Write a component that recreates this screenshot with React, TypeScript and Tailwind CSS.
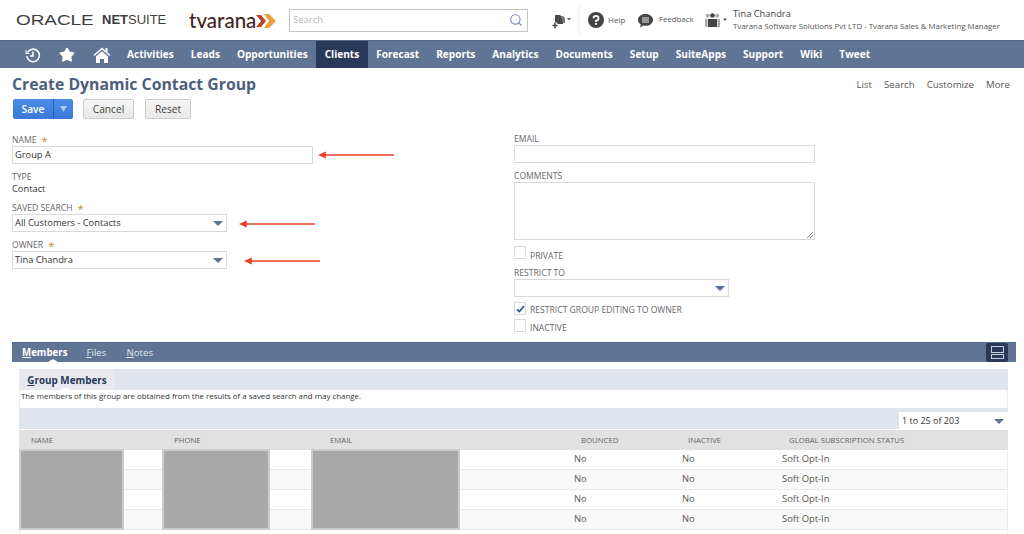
import * as React from 'react'
import { Search, Star } from 'lucide-react'

const navItems = ['Activities', 'Leads', 'Opportunities', 'Clients', 'Forecast', 'Reports', 'Analytics', 'Documents', 'Setup', 'SuiteApps', 'Support', 'Wiki', 'Tweet']
const gridCols = 'grid grid-cols-[143px_156px_251px_107px_101px_1fr]'

const Caret = () => (
  <svg width="10" height="5" viewBox="0 0 10 5" className="shrink-0">
    <path d="M0 0h10L5 5z" fill="#5d7095" />
  </svg>
)

const Label = ({ text, req }: { text: string; req?: boolean }) => (
  <div className="flex h-[14px] items-center pt-[2px] text-[8.600px] text-[#666]">
    {text}
    {req && <span className="ml-[5px] text-[11px] leading-none text-[#c08a2c]">*</span>}
  </div>
)

const Select = ({ value, width }: { value: string; width: string }) => (
  <div className={`flex h-[18px] items-center justify-between border border-[#d9d9d9] pl-[2px] pr-[3px] text-[9.300px] text-[#333] ${width}`}>
    <span>{value}</span>
    <Caret />
  </div>
)

const Check = ({ text, checked, className, textClass }: { text: string; checked?: boolean; className?: string; textClass: string }) => (
  <div className={`flex h-[14px] items-start ${className}`}>
    <div className="flex h-[13px] w-[12px] items-center justify-center border border-[#d9d9d9] bg-white">
      {checked && (
        <svg width="9" height="8" viewBox="0 0 9 8">
          <path d="M1 4.500 3.400 6.500 8 1" fill="none" stroke="#2f5597" strokeWidth="1.800" />
        </svg>
      )}
    </div>
    <span className={`ml-[4px] text-[8.600px] leading-[14px] text-[#666] ${textClass}`}>{text}</span>
  </div>
)

const Arrow = ({ x, y, w }: { x: string; y: string; w: string }) => (
  <svg width="78" height="8" viewBox="0 0 78 8" className={`absolute ${x} ${y} ${w}`} preserveAspectRatio="none">
    <path d="M0 4 8 0.500V3.300H78V4.700H8V7.500z" fill="#e8412a" />
  </svg>
)

export default function App() {
  return (
    <div className="relative h-[534px] w-[1024px] overflow-hidden bg-white font-['Open_Sans',sans-serif]">
      {/* top bar */}
      <div className="flex h-10 items-center">
        <div className="ml-[16px] flex w-[157px] items-center font-['Liberation_Sans',sans-serif] text-[#3d3d3d]">
          <span className="inline-block w-[86px] origin-left scale-x-[1.35] text-[14px]">ORACLE</span>
          <span className="text-[13px] font-bold">NET</span>
          <span className="text-[13px]">SUITE</span>
        </div>
        <div className="ml-[16px] flex w-[100px] items-center">
          <span className="font-['Lato',sans-serif] text-[20.500px] font-medium leading-none text-[#43251f]">tvarana</span>
          <svg width="22" height="14" viewBox="0 0 22 14" className="mt-[1px]">
            <path d="M0 1h5l5 6-5 6H0l5-6z" fill="#b5482a" />
            <path d="M8 0h5l7 7-7 7H8l5-7z" fill="#e9a13d" />
          </svg>
        </div>
        <div className="flex h-[23px] w-[239px] items-center justify-between border border-[#c4c4c4] pl-[3px] pr-[4px] text-[9.500px] text-[#bbb]">
          <span>Search</span>
          <Search size={14} strokeWidth={2} className="text-[#7c93b5]" />
        </div>
        <div className="ml-[24px] flex h-[23px] w-[27px] items-center">
          <svg width="20" height="14" viewBox="0 0 20 14" className="mt-[3px]">
            <path d="M3 0h5l3 3v6H3z" fill="#4a4a4a" />
            <path d="M9 1h2l2 2v5h-2z" fill="#777" />
            <path d="M3 7v6M0 10h6" stroke="#fff" strokeWidth="3" />
            <path d="M3 7.500v6M0.500 10.500h5" stroke="#4a4a4a" strokeWidth="1.500" />
            <path d="M15 3h4l-2 2.500z" fill="#555" />
          </svg>
        </div>
        <div className="h-[30px] w-px bg-[#efefef]" />
        <svg width="16" height="16" viewBox="0 0 16 16" className="ml-[8px]">
          <circle cx="8" cy="8" r="8" fill="#444" />
          <path d="M5.500 6.200A2.500 2.400 0 1 1 8 8.600V10" fill="none" stroke="#fff" strokeWidth="1.800" />
          <rect x="7.100" y="11" width="1.800" height="1.800" fill="#fff" />
        </svg>
        <span className="ml-[4px] w-[17px] text-[8px] text-[#555]">Help</span>
        <svg width="15" height="15" viewBox="0 0 15 15" className="ml-[13px]">
          <path d="M7.500 1C11.600 1 15 3.600 15 6.900S11.600 12.800 7.500 12.800c-.8 0-1.500-.1-2.200-.3L2 14.500l.8-3.200C1 10.200 0 8.600 0 6.900 0 3.600 3.400 1 7.500 1z" fill="#444" />
          <path d="M4 5h7M4 7h7M4 9h7" stroke="#fff" strokeWidth="0.900" />
        </svg>
        <span className="ml-[6px] w-[35px] whitespace-nowrap text-[7.800px] text-[#555]">Feedback</span>
        <svg width="22" height="14" viewBox="0 0 22 14" className="ml-[11px]">
          <circle cx="2.800" cy="2.800" r="2" fill="#aaa" />
          <circle cx="7.500" cy="2.500" r="2.300" fill="#444" />
          <circle cx="12.200" cy="2.800" r="2" fill="#aaa" />
          <path d="M0 6h2.500v8H0zM12.500 6H15v8h-2.500z" fill="#aaa" />
          <path d="M3 6h9v8H3z" fill="#444" />
          <path d="M18 5.500h4l-2 2.500z" fill="#555" />
        </svg>
        <div className="ml-[6px] flex flex-col">
          <span className="text-[9.300px] leading-[12px] text-[#444]">Tina Chandra</span>
          <span className="whitespace-nowrap text-[7.830px] leading-[12px] text-[#555]">Tvarana Software Solutions Pvt LTD - Tvarana Sales &amp; Marketing Manager</span>
        </div>
      </div>

      {/* nav */}
      <div className="flex h-[28px] items-stretch border-t border-[#54688a] bg-[#607596] pl-[25px]">
        <div className="flex w-[34px] items-center">
          <svg width="16" height="16" viewBox="0 0 16 16" fill="none" stroke="#fff" strokeWidth="1.500">
            <path d="M2.500 5.500A6.300 6.300 0 1 1 1.800 9" />
            <path d="M8 4.500V9H5" />
            <path d="M1 3v3.500h3.500" strokeWidth="1" />
          </svg>
        </div>
        <div className="flex w-[34px] items-center">
          <Star size={16} fill="#fff" stroke="#fff" />
        </div>
        <div className="flex w-[25.500px] items-center">
          <svg width="18" height="16" viewBox="0 0 18 16">
            <path d="M9 0.500 0.500 8l1 1L9 2.500 16.500 9l1-1-3-2.600V1h-2v2.800z" fill="#fff" />
            <path d="M3 9.500 9 4.300l6 5.200V16h-4v-4H7v4H3z" fill="#fff" />
          </svg>
        </div>
        {navItems.map((item) => (
          <div
            key={item}
            className={`flex items-center px-[8.500px] text-[10.080px] font-bold text-white ${item === 'Clients' ? 'bg-[#29395a]' : ''}`}
          >
            {item}
          </div>
        ))}
      </div>

      {/* title row */}
      <div className="flex h-[31px] items-center justify-between pl-[12px] pr-[14px] pt-[3px]">
        <h1 className="text-[15.800px] font-bold leading-none text-[#4d5f7c]">Create Dynamic Contact Group</h1>
        <div className="flex gap-[12px] pt-[1px] text-[9.700px] text-[#555]">
          <span>List</span>
          <span>Search</span>
          <span>Customize</span>
          <span>More</span>
        </div>
      </div>

      {/* buttons */}
      <div className="flex h-[20px] items-stretch pl-[13px] text-[10.200px]">
        <div className="flex w-[60px] rounded-[2px] bg-linear-to-b from-[#4a8de8] to-[#3a78d8] text-white">
          <span className="flex w-[40px] items-center justify-center pt-[1px] font-semibold">Save</span>
          <span className="flex flex-1 items-center justify-center border-l border-[#2a5fb0]">
            <svg width="7" height="6" viewBox="0 0 7 6"><path d="M0 0h7L3.500 6z" fill="#a9c6f0" /></svg>
          </span>
        </div>
        <div className="ml-[10px] flex w-[51px] items-center justify-center rounded-[2px] border border-[#ccc] bg-linear-to-b from-[#f6f6f6] to-[#e8e8e8] pt-[1px] text-[#444]">Cancel</div>
        <div className="ml-[11px] flex w-[46px] items-center justify-center rounded-[2px] border border-[#ccc] bg-linear-to-b from-[#f6f6f6] to-[#e8e8e8] pt-[1px] text-[#444]">Reset</div>
      </div>

      {/* form */}
      <div className="flex h-[223px] pt-[13px]">
        <div className="ml-[12px] flex w-[502px] flex-col">
          <Label text="NAME" req />
          <div className="h-[18px] w-[301px] border border-[#d9d9d9] pl-[2px] text-[9.300px] leading-[16px] text-[#333]">Group A</div>
          <div className="mt-[5px]"><Label text="TYPE" /></div>
          <div className="h-[12px] text-[9.300px] leading-[12px] text-[#333]">Contact</div>
          <div className="mt-[5px]"><Label text="SAVED SEARCH" req /></div>
          <Select value="All Customers - Contacts" width="w-[215px]" />
          <div className="mt-[5px]"><Label text="OWNER" req /></div>
          <Select value="Tina Chandra" width="w-[215px]" />
        </div>
        <div className="-mt-px flex w-[301px] flex-col">
          <Label text="EMAIL" />
          <div className="h-[18px] w-[301px] border border-[#d9d9d9]" />
          <div className="mt-[5px]"><Label text="COMMENTS" /></div>
          <div className="relative h-[58px] w-[301px] border border-[#d9d9d9]">
            <svg width="6" height="6" viewBox="0 0 6 6" className="absolute bottom-[1px] right-[1px]">
              <path d="M0 6 6 0M3 6l3-3" stroke="#777" strokeWidth="0.800" />
            </svg>
          </div>
          <Check text="PRIVATE" className="mt-[6px]" textClass="mt-[3px]" />
          <div className="mt-[5px]"><Label text="RESTRICT TO" /></div>
          <Select value="" width="w-[215px]" />
          <Check text="RESTRICT GROUP EDITING TO OWNER" checked className="mt-[5px]" textClass="mt-[1px]" />
          <Check text="INACTIVE" className="mt-[3px]" textClass="mt-[2px]" />
        </div>
      </div>

      {/* tabs */}
      <div className="relative ml-[12px] flex h-[20px] w-[1004px] items-center border-t border-[#54688a] bg-[#607596] pl-[10px] pt-[1px] text-[9.700px] text-white">
        <span className="font-bold"><u>M</u>embers</span>
        <span className="ml-[19px] text-[#dfe4ee]"><u>F</u>iles</span>
        <span className="ml-[20px] text-[#dfe4ee]"><u>N</u>otes</span>
        <div className="absolute bottom-0 left-[36px] h-0 w-0 border-x-[5px] border-b-[3px] border-x-transparent border-b-white" />
        <div className="absolute right-[8px] top-0 flex h-[19px] w-[22px] items-center justify-center rounded-[2px] bg-[#29395a]">
          <svg width="13" height="13" viewBox="0 0 13 13" fill="none" stroke="#c5cddb" strokeWidth="1">
            <rect x="0.500" y="0.500" width="12" height="6" />
            <rect x="0.500" y="8.500" width="12" height="4" />
          </svg>
        </div>
      </div>

      {/* subtab */}
      <div className="ml-[19px] mt-[7px] w-[989px]">
        <div className="flex h-[21px] bg-[#e0e4ed]">
          <div className="relative flex w-[96px] items-center justify-center bg-[#e8e9ee] pt-[2px] text-[9.900px] font-bold text-[#29395a]">
            <span><u>G</u>roup Members</span>
            <div className="absolute bottom-0 left-[42px] h-0 w-0 border-x-[5px] border-b-[3px] border-x-transparent border-b-white" />
          </div>
        </div>
        <div className="h-[18px] border-x border-[#eee] pl-px text-[7.900px] leading-[13px] text-[#333]">
          The members of this group are obtained from the results of a saved search and may change.
        </div>
        <div className="flex h-[22px] justify-end border-b border-white bg-[#dfe4ee] pt-[4px]">
          <div className="flex h-[18px] w-[109px] items-center justify-between bg-white pl-[3px] pr-[4px] text-[9px] text-[#333]">
            <span>1 to 25 of 203</span>
            <Caret />
          </div>
        </div>
        <div className={`${gridCols} h-[20px] items-center bg-[#e1e1e1] pt-[2px] text-[7.760px] text-[#666]`}>
          {['NAME', 'PHONE', 'EMAIL', 'BOUNCED', 'INACTIVE', 'GLOBAL SUBSCRIPTION STATUS'].map((h) => (
            <span key={h} className="pl-[12px]">{h}</span>
          ))}
        </div>
        {[0, 1, 2, 3].map((r) => (
          <div key={r} className={`${gridCols} h-[20px] items-center border-x border-b border-x-[#eee] border-b-[#e8e8e8] text-[9.400px] text-[#555] ${r % 2 ? 'bg-[#f9f9f9]' : 'bg-white'}`}>
            <span />
            <span />
            <span />
            <span className="pl-[4px]">No</span>
            <span className="pl-[5px]">No</span>
            <span className="pl-[4px]">Soft Opt-In</span>
          </div>
        ))}
        <div className="h-[4px] border-x border-[#eee]" />
      </div>

      {/* redaction blocks and annotation arrows lie over the page */}
      <div className="absolute left-[19px] top-[449px] h-[81px] w-[105px] border-2 border-[#ccc] bg-[#a9a9a9]" />
      <div className="absolute left-[162px] top-[449px] h-[81px] w-[108px] border-2 border-[#ccc] bg-[#a9a9a9]" />
      <div className="absolute left-[311px] top-[449px] h-[81px] w-[149px] border-2 border-[#ccc] bg-[#a9a9a9]" />
      <Arrow x="left-[318px]" y="top-[151px]" w="w-[76px]" />
      <Arrow x="left-[239px]" y="top-[220px]" w="w-[76px]" />
      <Arrow x="left-[244px]" y="top-[257px]" w="w-[76px]" />
    </div>
  )
}
